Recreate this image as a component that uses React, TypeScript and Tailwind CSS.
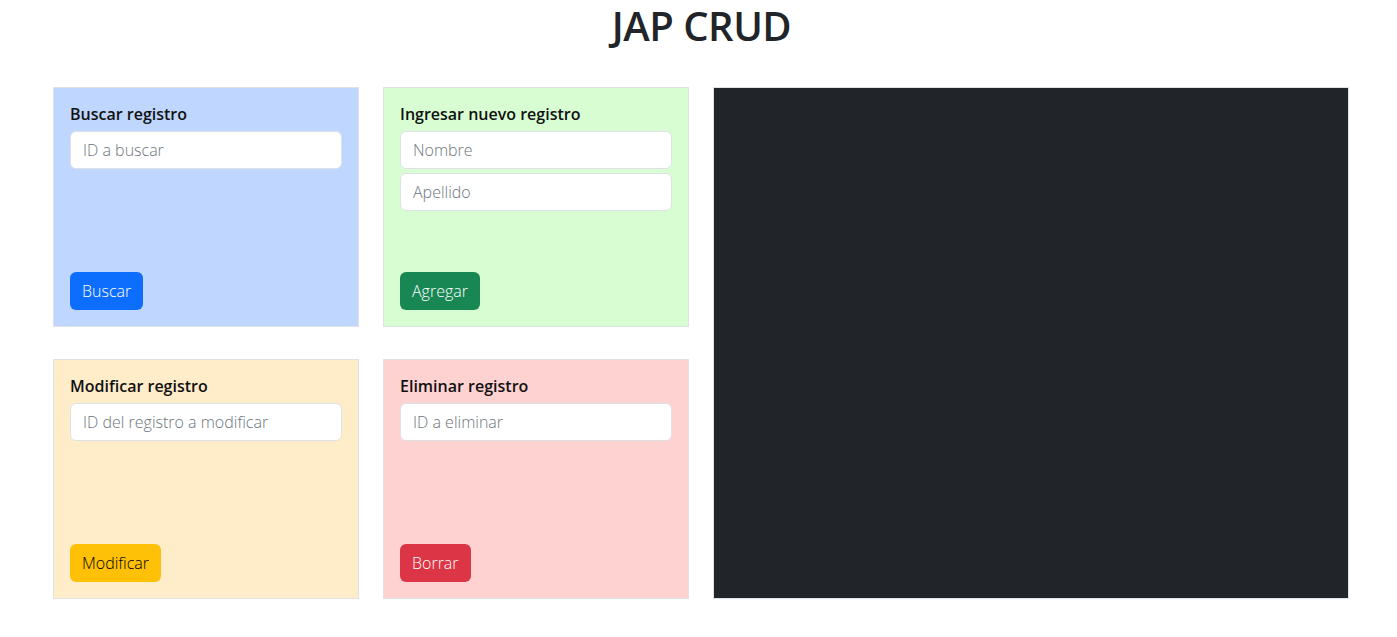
import type { ReactNode } from 'react'

type Panel = {
  title: string
  fields: string[]
  button: string
  bg: string
  btn: string
}

const panels: Panel[] = [
  { title: 'Buscar registro', fields: ['ID a buscar'], button: 'Buscar', bg: 'bg-[#bfd7fe]', btn: 'bg-[#0d6efd] text-white' },
  { title: 'Ingresar nuevo registro', fields: ['Nombre', 'Apellido'], button: 'Agregar', bg: 'bg-[#d9fdd3]', btn: 'bg-[#198754] text-white' },
  { title: 'Modificar registro', fields: ['ID del registro a modificar'], button: 'Modificar', bg: 'bg-[#ffecc9]', btn: 'bg-[#ffc107] text-black' },
  { title: 'Eliminar registro', fields: ['ID a eliminar'], button: 'Borrar', bg: 'bg-[#ffd2d2]', btn: 'bg-[#dc3545] text-white' },
]

function Card({ panel }: { panel: Panel }): ReactNode {
  return (
    <div className={`${panel.bg} w-[306px] h-[240px] border border-[#dee2e6] p-4 flex flex-col`}>
      <h5 className="text-[16px] leading-[20px] font-semibold text-[#111] mb-[7px]">{panel.title}</h5>
      <div className="flex flex-col gap-1">
        {panel.fields.map(f => (
          <input
            key={f}
            placeholder={f}
            className="h-[38px] w-full bg-white border border-[#dee2e6] rounded-[6px] px-3 text-[16px] font-light text-[#212529] placeholder:text-[#6c757d] outline-none"
          />
        ))}
      </div>
      <div className="mt-auto">
        <button className={`${panel.btn} h-[38px] px-3 rounded-[6px] text-[16px] font-light`}>{panel.button}</button>
      </div>
    </div>
  )
}

export default function App() {
  return (
    <div className="min-h-[637px] bg-white font-['Open_Sans',sans-serif] text-[#212529]">
      <h1 className="text-center text-[40px] leading-[52px] font-semibold pl-[6px] mb-[35px] tracking-[-0.5px]">JAP CRUD</h1>
      <div className="flex gap-[24px] pl-[53px]">
        <div className="grid grid-cols-[306px_306px] gap-x-[24px] gap-y-[32px]">
          {panels.map(p => <Card key={p.title} panel={p} />)}
        </div>
        <div className="w-[636px] h-[512px] bg-[#212529] border border-[#dee2e6]" />
      </div>
    </div>
  )
}
